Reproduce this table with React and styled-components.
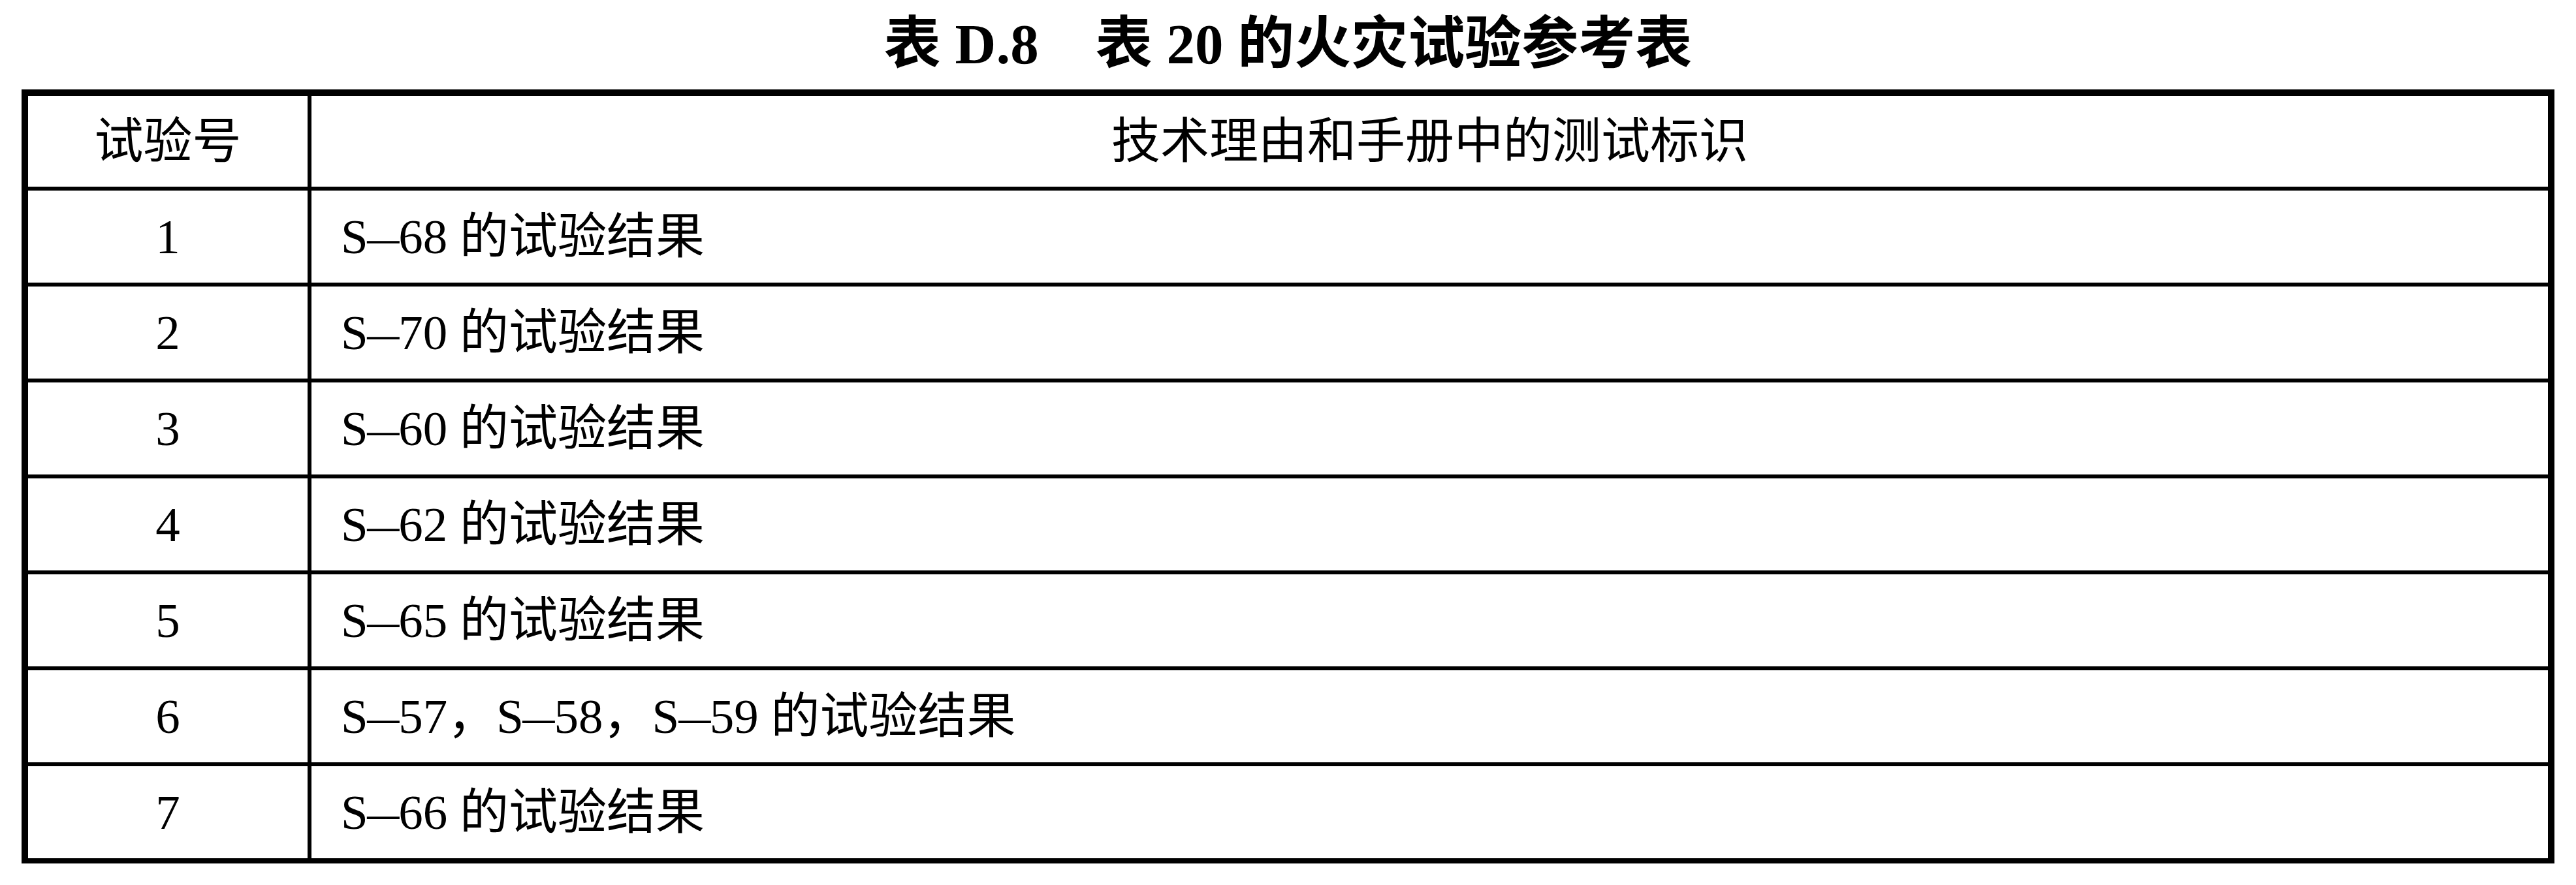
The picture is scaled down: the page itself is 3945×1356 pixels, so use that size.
import React from 'react';
import styled, { createGlobalStyle } from 'styled-components';

const GlobalStyle = createGlobalStyle`
  html,
  body {
    margin: 0;
    padding: 0;
    background: #ffffff;
  }
  body {
    color: #000000;
    font-family: 'Liberation Serif', 'Noto Sans CJK SC', serif;
  }
`;

const Page = styled.div`
  width: 3945px;
  min-height: 1356px;
  padding: 0 33px;
  box-sizing: border-box;
`;

const Title = styled.h1`
  margin: 0;
  padding-top: 24px;
  height: 113px;
  box-sizing: border-box;
  text-align: center;
  font-family: 'Liberation Serif', 'Noto Sans CJK SC', serif;
  font-weight: 700;
  font-size: 87px;
  line-height: 87px;
  white-space: pre;
`;

const Frame = styled.div`
  margin-top: 24px;
  border: 10px solid #000;
  border-bottom-width: 8px;
  display: flex;
  flex-direction: column;
`;

const Row = styled.div`
  display: flex;
  height: ${(p) => (p.head ? 139 : 141)}px;
  border-top: ${(p) => (p.head ? 0 : 6)}px solid #000;
`;

const NumCell = styled.div`
  width: 428px;
  flex: none;
  border-right: 6px solid #000;
  display: flex;
  align-items: center;
  justify-content: center;
  font-size: 75px;
  line-height: 1;
`;

const TextCell = styled.div`
  flex: 1;
  display: flex;
  align-items: center;
  justify-content: ${(p) => (p.center ? 'center' : 'flex-start')};
  padding-left: ${(p) => (p.center ? 0 : 45)}px;
  font-size: 75px;
  line-height: 1;
  white-space: pre;
`;

const Dash = styled.span`
  display: inline-block;
  transform: scaleX(1.3);
  margin: 0 0.06em;
`;

const rows = [
  { no: '1', refs: 'S–68' },
  { no: '2', refs: 'S–70' },
  { no: '3', refs: 'S–60' },
  { no: '4', refs: 'S–62' },
  { no: '5', refs: 'S–65' },
  { no: '6', refs: 'S–57，S–58，S–59' },
  { no: '7', refs: 'S–66' },
];

// puts each dash in its own span so it can be drawn a bit wider
const Refs = ({ text }) =>
  text.split('–').map((part, i) => (
    <React.Fragment key={i}>
      {i > 0 && <Dash>–</Dash>}
      {part}
    </React.Fragment>
  ));

const App = () => (
  <Page>
    <GlobalStyle />
    <Title>{'表 D.8　表 20 的火灾试验参考表'}</Title>
    <Frame>
      <Row head>
        <NumCell>试验号</NumCell>
        <TextCell center>技术理由和手册中的测试标识</TextCell>
      </Row>
      {rows.map((r) => (
        <Row key={r.no}>
          <NumCell>{r.no}</NumCell>
          <TextCell>
            <Refs text={r.refs} />
            {' 的试验结果'}
          </TextCell>
        </Row>
      ))}
    </Frame>
  </Page>
);

export default App;
